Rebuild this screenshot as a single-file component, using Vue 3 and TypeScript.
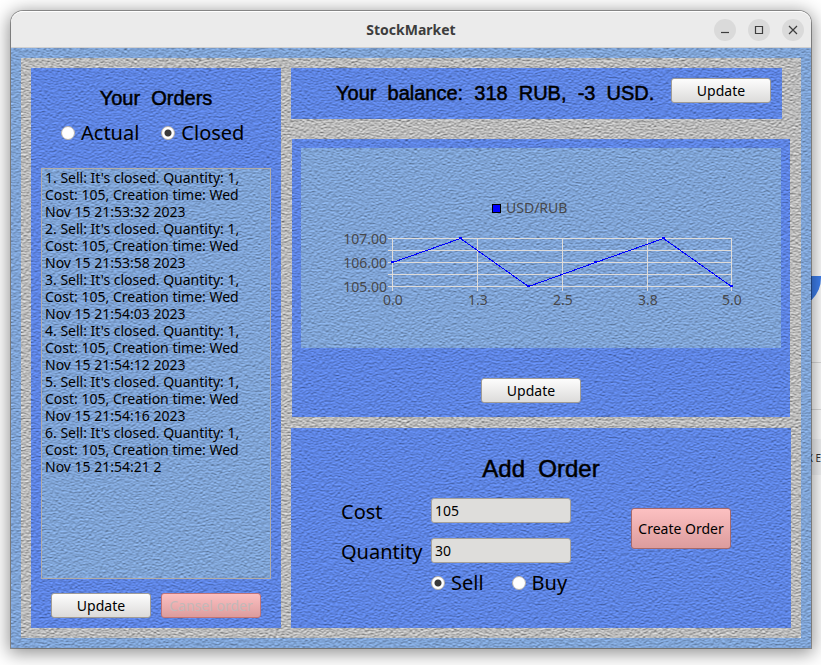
<script setup lang="ts">
import { computed, ref } from 'vue'

type OrderView = 'actual' | 'closed'
type Side = 'sell' | 'buy'

const orderView = ref<OrderView>('closed')
const side = ref<Side>('sell')
const cost = ref('105')
const quantity = ref('30')

const ordersTitle = 'Your  Orders'
const balanceTitle = 'Your  balance:  318  RUB,  -3  USD.'
const addTitle = 'Add  Order'

const orderLog = `1. Sell: It's closed. Quantity: 1,
Cost: 105, Creation time: Wed
Nov 15 21:53:32 2023
2. Sell: It's closed. Quantity: 1,
Cost: 105, Creation time: Wed
Nov 15 21:53:58 2023
3. Sell: It's closed. Quantity: 1,
Cost: 105, Creation time: Wed
Nov 15 21:54:03 2023
4. Sell: It's closed. Quantity: 1,
Cost: 105, Creation time: Wed
Nov 15 21:54:12 2023
5. Sell: It's closed. Quantity: 1,
Cost: 105, Creation time: Wed
Nov 15 21:54:16 2023
6. Sell: It's closed. Quantity: 1,
Cost: 105, Creation time: Wed
Nov 15 21:54:21 2`

const rates = [106, 107, 105, 106, 107, 105]
const plot = { left: 91, top: 90, width: 339, height: 48 }
const points = rates.map((rate, i) => ({
  x: Math.round(plot.left + (i * plot.width) / 5),
  y: plot.top + ((107 - rate) * plot.height) / 2,
}))
const linePoints = computed(() => points.map((p) => `${p.x + 0.5},${p.y + 0.5}`).join(' '))
const rows = [0, 1, 2, 3, 4].map((i) => plot.top + i * 12)
const columns = [91, 176, 261, 346, 430]
const xLabels = ['0.0', '1.3', '2.5', '3.8', '5.0']
const yLabels = ['107.00', '106.00', '105.00']
</script>

<template>
  <div class="desktop">
    <svg class="defs" aria-hidden="true">
      <filter id="paper" x="0" y="0" width="100%" height="100%" color-interpolation-filters="sRGB">
        <feTurbulence type="fractalNoise" baseFrequency="0.36 0.85" numOctaves="2" seed="4" result="noise" />
        <feDiffuseLighting in="noise" surfaceScale="1" diffuseConstant="1" lighting-color="#fff" result="light">
          <feDistantLight azimuth="265" elevation="45" />
        </feDiffuseLighting>
        <feComposite in="SourceGraphic" in2="light" operator="arithmetic" k1="0.8" k2="0.44" />
      </filter>
    </svg>

    <div class="behind" aria-hidden="true">
      <i class="disc"></i>
      <i class="rows"></i>
      <span class="behind-text">X E</span>
    </div>

    <main class="window">
      <header class="titlebar">
        <h1>StockMarket</h1>
        <div class="controls">
          <button type="button" aria-label="Minimize">
            <svg viewBox="0 0 22 22"><path d="M7 13.5h8" /></svg>
          </button>
          <button type="button" aria-label="Maximize">
            <svg viewBox="0 0 22 22"><path d="M7.5 7.5h7v7h-7z" /></svg>
          </button>
          <button type="button" aria-label="Close">
            <svg viewBox="0 0 22 22"><path d="M7 7l8 8M15 7l-8 8" /></svg>
          </button>
        </div>
      </header>

      <div class="body paper steel">
        <div class="board paper stone">
          <section class="orders paper royal">
            <h2>{{ ordersTitle }}</h2>
            <div class="radios">
              <label><input v-model="orderView" type="radio" name="view" value="actual" />Actual</label>
              <label><input v-model="orderView" type="radio" name="view" value="closed" />Closed</label>
            </div>
            <div class="log paper steel">{{ orderLog }}</div>
            <div class="actions">
              <button type="button" class="btn">Update</button>
              <button type="button" class="btn danger" disabled>Cansel order</button>
            </div>
          </section>

          <div class="right">
            <section class="balance paper royal">
              <h2>{{ balanceTitle }}</h2>
              <button type="button" class="btn">Update</button>
            </section>

            <section class="market paper royal">
              <div class="chart paper steel">
                <svg viewBox="0 0 480 200" role="img" aria-label="USD/RUB">
                  <rect x="191.5" y="56.5" width="8" height="8" class="key" />
                  <text x="205" y="65">USD/RUB</text>
                  <g class="grid">
                    <rect v-for="y in rows" :key="'r' + y" :x="plot.left - 4" :y="y" :width="plot.width + 5" height="1" />
                    <rect v-for="x in columns" :key="'c' + x" :x="x" :y="plot.top" width="1" :height="plot.height + 5" />
                  </g>
                  <text v-for="(label, i) in yLabels" :key="label" x="86" :y="96 + i * 24" text-anchor="end">{{ label }}</text>
                  <text v-for="(label, i) in xLabels" :key="label" :x="columns[i] + 1" y="157" text-anchor="middle">{{ label }}</text>
                  <polyline :points="linePoints" class="line" />
                  <rect v-for="p in points" :key="p.x" :x="p.x - 1" :y="p.y - 1" width="3" height="2" class="dot" />
                </svg>
              </div>
              <div class="market-actions">
                <button type="button" class="btn">Update</button>
              </div>
            </section>

            <section class="add paper royal">
              <h2>{{ addTitle }}</h2>
              <form class="form" @submit.prevent>
                <div class="fields">
                  <label for="cost">Cost</label>
                  <input id="cost" v-model="cost" type="text" />
                  <label for="quantity">Quantity</label>
                  <input id="quantity" v-model="quantity" type="text" />
                  <div class="sides">
                    <label><input v-model="side" type="radio" name="side" value="sell" />Sell</label>
                    <label><input v-model="side" type="radio" name="side" value="buy" />Buy</label>
                  </div>
                </div>
                <button type="submit" class="btn danger tall">Create Order</button>
              </form>
            </section>
          </div>
        </div>
      </div>
    </main>
  </div>
</template>

<style>
body {
  margin: 0;
  background: #fff;
}
</style>

<style scoped>
* {
  box-sizing: border-box;
}
.desktop {
  position: relative;
  min-height: 100vh;
  padding: 11px 10px 17px 11px;
  overflow: hidden;
  background: #fff;
  font-family: 'Noto Sans', 'Open Sans', sans-serif;
  font-size: 14px;
  color: #000;
}
.defs {
  position: absolute;
  width: 0;
  height: 0;
}
.behind {
  position: absolute;
  inset: 0;
}
.disc {
  position: absolute;
  right: 0;
  top: 276px;
  width: 30px;
  height: 32px;
  border-radius: 0 0 30px 0;
  background: #3f80f0;
}
.rows {
  position: absolute;
  right: 0;
  top: 362px;
  width: 30px;
  height: 113px;
  border-top: 1px solid #ddd;
  background: linear-gradient(transparent 46px, #ddd 46px, #ddd 47px, transparent 47px, transparent 76px, #f3f4f6 76px);
}
.behind-text {
  position: absolute;
  right: 0;
  top: 450px;
  font-size: 10px;
  line-height: 16px;
  color: #333;
}
.window {
  position: relative;
  border-radius: 12px 12px 0 0;
  box-shadow: 0 0 0 1px rgba(0, 0, 0, 0.35), 0 3px 18px 2px rgba(0, 0, 0, 0.45);
}
.titlebar {
  display: grid;
  grid-template-columns: 1fr auto 1fr;
  align-items: center;
  height: 37px;
  padding: 0 7px;
  border-radius: 12px 12px 0 0;
  border-top: 1px solid #fff;
  border-bottom: 1px solid #cfcfcf;
  background: #ebebeb;
}
.titlebar h1 {
  grid-column: 2;
  margin: 0;
  font-size: 14px;
  line-height: 18px;
  font-weight: 700;
  color: #3d3d3d;
}
.controls {
  display: flex;
  justify-content: flex-end;
  gap: 12px;
}
.controls button {
  width: 22px;
  height: 22px;
  padding: 0;
  border: 0;
  border-radius: 50%;
  background: #dadada;
}
.controls svg {
  display: block;
  width: 22px;
  height: 22px;
  fill: none;
  stroke: #3d3d3d;
  stroke-width: 1.2;
}
.paper {
  position: relative;
  isolation: isolate;
}
.paper::before {
  content: '';
  position: absolute;
  inset: 0;
  z-index: -1;
  background: var(--tone);
  filter: url(#paper) contrast(var(--grain, 1.1));
}
.steel {
  --tone: #7e9fcc;
  --grain: 1.1;
}
.stone {
  --tone: #a3a3a3;
  --grain: 1.6;
}
.royal {
  --tone: #6083d8;
  --grain: 1.1;
}
.body {
  padding: 10px;
}
.board {
  display: grid;
  grid-template-columns: 250px 1fr;
  gap: 10px;
  padding: 10px;
}
h2 {
  margin: 0;
  font-family: 'Liberation Sans', sans-serif;
  font-size: 20px;
  line-height: 24px;
  font-weight: 400;
  white-space: pre;
  -webkit-text-stroke: 0.5px #000;
}
.orders {
  display: flex;
  flex-direction: column;
  height: 560px;
  padding: 18px 10px 10px;
}
.orders h2 {
  text-align: center;
}
.radios {
  display: flex;
  gap: 22px;
  padding: 9px 20px 21px;
}
.radios label,
.sides label {
  display: flex;
  align-items: center;
  gap: 6px;
  font-size: 20px;
  line-height: 28px;
}
input[type='radio'] {
  appearance: none;
  width: 14px;
  height: 14px;
  margin: 0;
  border: 1px solid #b9b4ae;
  border-radius: 50%;
  background: #fff;
}
input[type='radio']:checked {
  background: radial-gradient(circle, #3a3a3a 3px, #fff 4px);
}
.log {
  flex: 1;
  padding: 0 3px;
  border: 1px solid #b0aca6;
  line-height: 17px;
  white-space: pre;
}
.actions {
  display: flex;
  justify-content: center;
  gap: 10px;
  padding-top: 14px;
}
.btn {
  width: 100px;
  height: 25px;
  padding: 0;
  border: 1px solid #a09c96;
  border-radius: 3px;
  background: linear-gradient(#fdfdfd, #dcdbda);
  font: inherit;
  line-height: 22px;
  white-space: nowrap;
  color: #000;
}
.danger {
  border-color: #a5696c;
  background: linear-gradient(#fcc0c1, #dc9c9d);
}
.danger:disabled {
  border-color: #c07478;
  color: #c4b8b8;
}
.tall {
  height: 41px;
}
.right {
  display: flex;
  flex-direction: column;
}
.balance {
  display: flex;
  align-items: flex-start;
  justify-content: space-between;
  height: 51px;
  margin-right: 9px;
  padding: 10px 11px 0 45px;
}
.balance h2 {
  padding-top: 3px;
}
.market {
  margin: 20px 1px 11px;
  padding: 9px 9px 14px;
}
.market-actions {
  display: flex;
  justify-content: center;
  padding: 30px 20px 0 0;
}
.chart svg {
  display: block;
  width: 100%;
}
.chart text {
  font-size: 14px;
  fill: #46474b;
}
.key {
  fill: #00f;
  stroke: #000;
}
.grid {
  fill: #dfdcd9;
}
.line {
  fill: none;
  stroke: #00f;
  shape-rendering: crispEdges;
}
.dot {
  fill: #00f;
}
.add {
  flex: 1;
  padding: 27px 60px 0 50px;
}
.add h2 {
  padding-left: 10px;
  text-align: center;
  font-size: 24px;
  line-height: 28px;
}
.form {
  display: flex;
  justify-content: space-between;
  align-items: flex-start;
  padding-top: 15px;
}
.fields {
  display: grid;
  grid-template-columns: 90px 140px;
  grid-template-rows: 25px 25px 28px;
  row-gap: 15px;
  align-items: center;
}
.fields > label {
  padding-top: 2px;
  font-size: 20px;
}
.fields > input {
  width: 140px;
  height: 25px;
  padding: 0 3px 1px;
  border: 1px solid #a5a19b;
  border-radius: 3px;
  background: #dedddb;
  font: inherit;
  color: #000;
}
.sides {
  grid-column: 2;
  display: flex;
  gap: 28px;
  margin-top: -18px;
}
.form .tall {
  margin-top: 10px;
}
</style>
